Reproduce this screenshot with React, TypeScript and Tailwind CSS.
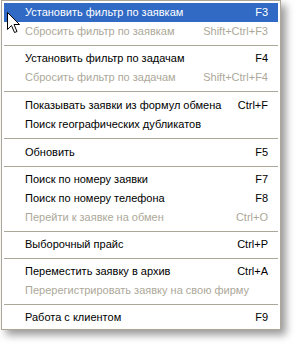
import React from 'react';

type Item = { label: string; shortcut?: string; disabled?: boolean; active?: boolean } | { sep: number };

const items: Item[] = [
  { label: 'Установить фильтр по заявкам', shortcut: 'F3', active: true },
  { label: 'Сбросить фильтр по заявкам', shortcut: 'Shift+Ctrl+F3', disabled: true },
  { sep: 8 },
  { label: 'Установить фильтр по задачам', shortcut: 'F4' },
  { label: 'Сбросить фильтр по задачам', shortcut: 'Shift+Ctrl+F4', disabled: true },
  { sep: 9 },
  { label: 'Показывать заявки из формул обмена', shortcut: 'Ctrl+F' },
  { label: 'Поиск географических дубликатов' },
  { sep: 9 },
  { label: 'Обновить', shortcut: 'F5' },
  { sep: 8 },
  { label: 'Поиск по номеру заявки', shortcut: 'F7' },
  { label: 'Поиск по номеру телефона', shortcut: 'F8' },
  { label: 'Перейти к заявке на обмен', shortcut: 'Ctrl+O', disabled: true },
  { sep: 8 },
  { label: 'Выборочный прайс', shortcut: 'Ctrl+P' },
  { sep: 8 },
  { label: 'Переместить заявку в архив', shortcut: 'Ctrl+A' },
  { label: 'Перерегистрировать заявку на свою фирму', disabled: true },
  { sep: 8 },
  { label: 'Работа с клиентом', shortcut: 'F9' },
];

const Cursor: React.FC = () => (
  <svg className="absolute left-[7px] top-[12px]" width="14" height="22" viewBox="0 0 14 22">
    <path
      d="M0.5 0.5 L0.5 17.5 L4.5 13.5 L7.5 20.5 L10 19.5 L7 12.5 L12.5 12.5 Z"
      fill="#fff"
      stroke="#000"
      strokeWidth="1"
      strokeLinejoin="miter"
    />
  </svg>
);

const App: React.FC = () => {
  return (
    <div className="relative w-[297px] h-[344px] bg-white font-['Liberation_Sans',sans-serif] text-[11px]">
      <div className="ml-[1px] w-[280px] border border-[#aca899] bg-white px-[2px] pt-[2px] pb-[2px] shadow-[5px_5px_8px_rgba(0,0,0,0.4)]">
        {items.map((it, i) =>
          'sep' in it ? (
            <div key={i} className={`flex items-center ${it.sep === 9 ? 'h-[9px]' : 'h-[8px]'}`}>
              <div className="h-px w-full bg-[#aca899]" />
            </div>
          ) : (
            <div
              key={i}
              className={`h-[19px] flex items-center justify-between pl-[21px] pr-[10px] ${
                it.active ? 'bg-[#316ac5] text-white' : it.disabled ? 'text-[#aca899]' : 'text-black'
              }`}
            >
              <span>{it.label}</span>
              {it.shortcut && <span>{it.shortcut}</span>}
            </div>
          )
        )}
      </div>
      <Cursor />
    </div>
  );
};

export default App;
